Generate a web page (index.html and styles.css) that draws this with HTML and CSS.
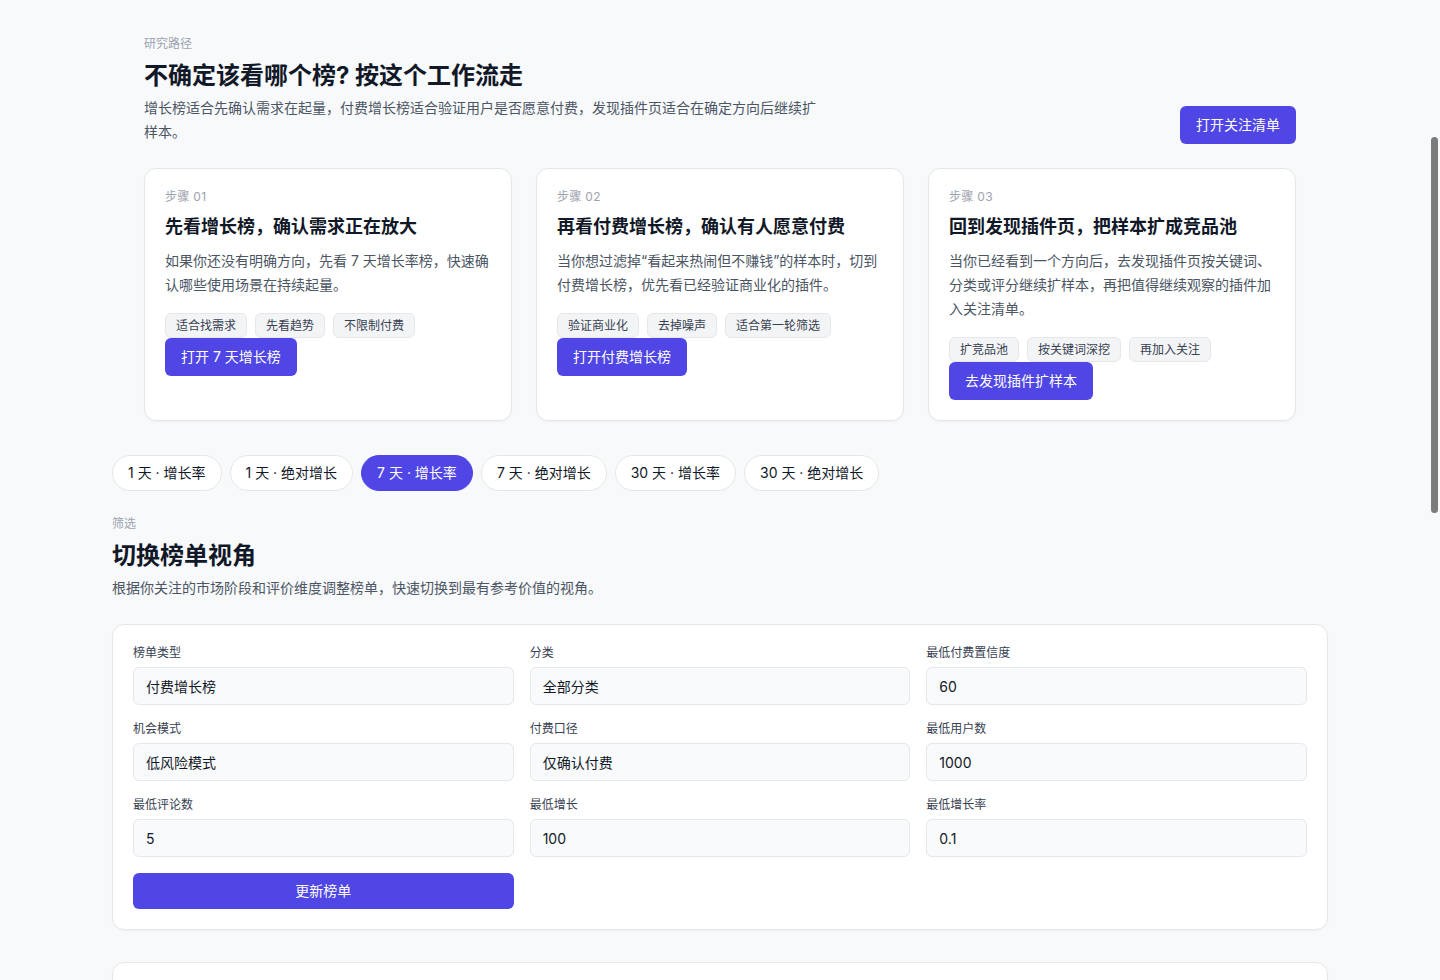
FILE: index.html
```html
<!DOCTYPE html>
<html lang="zh-CN">
  <head>
    <meta charset="UTF-8" />
    <meta name="viewport" content="width=device-width, initial-scale=1.0" />
    <title>榜单 · 研究路径</title>
    <link rel="stylesheet" href="styles.css">
  </head>
  <body>
    <main class="page">
      <!-- 研究路径：三步工作流 -->
      <section class="guide">
        <div class="guide-head">
          <div class="guide-intro">
            <p class="eyebrow">研究路径</p>
            <h1 class="guide-title">不确定该看哪个榜? 按这个工作流走</h1>
            <p class="guide-desc">增长榜适合先确认需求在起量，付费增长榜适合验证用户是否愿意付费，发现插件页适合在确定方向后继续扩样本。</p>
          </div>
          <a class="btn btn-primary" href="#">打开关注清单</a>
        </div>

        <div class="steps">
          <article class="step-card">
            <p class="eyebrow step-no">步骤 01</p>
            <h3 class="step-title">先看增长榜，确认需求正在放大</h3>
            <p class="step-desc">如果你还没有明确方向，先看 7 天增长率榜，快速确认哪些使用场景在持续起量。</p>
            <div class="tags">
              <span class="tag">适合找需求</span>
              <span class="tag">先看趋势</span>
              <span class="tag">不限制付费</span>
            </div>
            <a class="btn btn-primary" href="#">打开 7 天增长榜</a>
          </article>

          <article class="step-card">
            <p class="eyebrow step-no">步骤 02</p>
            <h3 class="step-title">再看付费增长榜，确认有人愿意付费</h3>
            <p class="step-desc">当你想过滤掉“看起来热闹但不赚钱”的样本时，切到付费增长榜，优先看已经验证商业化的插件。</p>
            <div class="tags">
              <span class="tag">验证商业化</span>
              <span class="tag">去掉噪声</span>
              <span class="tag">适合第一轮筛选</span>
            </div>
            <a class="btn btn-primary" href="#">打开付费增长榜</a>
          </article>

          <article class="step-card">
            <p class="eyebrow step-no">步骤 03</p>
            <h3 class="step-title">回到发现插件页，把样本扩成竞品池</h3>
            <p class="step-desc">当你已经看到一个方向后，去发现插件页按关键词、分类或评分继续扩样本，再把值得继续观察的插件加入关注清单。</p>
            <div class="tags">
              <span class="tag">扩竞品池</span>
              <span class="tag">按关键词深挖</span>
              <span class="tag">再加入关注</span>
            </div>
            <a class="btn btn-primary" href="#">去发现插件扩样本</a>
          </article>
        </div>
      </section>

      <!-- 榜单快捷切换 -->
      <nav class="board-tabs">
        <a class="board-tab" href="#">1 天 · 增长率</a>
        <a class="board-tab" href="#">1 天 · 绝对增长</a>
        <a class="board-tab active" href="#">7 天 · 增长率</a>
        <a class="board-tab" href="#">7 天 · 绝对增长</a>
        <a class="board-tab" href="#">30 天 · 增长率</a>
        <a class="board-tab" href="#">30 天 · 绝对增长</a>
      </nav>

      <!-- 筛选表单 -->
      <section class="filters">
        <p class="eyebrow">筛选</p>
        <h2 class="section-title">切换榜单视角</h2>
        <p class="section-desc">根据你关注的市场阶段和评价维度调整榜单，快速切换到最有参考价值的视角。</p>

        <form class="panel filter-form">
          <label class="field">
            <span class="field-label">榜单类型</span>
            <select class="control">
              <option>付费增长榜</option>
              <option>增长榜</option>
            </select>
          </label>
          <label class="field">
            <span class="field-label">分类</span>
            <select class="control">
              <option>全部分类</option>
            </select>
          </label>
          <label class="field">
            <span class="field-label">最低付费置信度</span>
            <input class="control" type="text" value="60" />
          </label>

          <label class="field">
            <span class="field-label">机会模式</span>
            <select class="control">
              <option>低风险模式</option>
            </select>
          </label>
          <label class="field">
            <span class="field-label">付费口径</span>
            <select class="control">
              <option>仅确认付费</option>
            </select>
          </label>
          <label class="field">
            <span class="field-label">最低用户数</span>
            <input class="control" type="text" value="1000" />
          </label>

          <label class="field">
            <span class="field-label">最低评论数</span>
            <input class="control" type="text" value="5" />
          </label>
          <label class="field">
            <span class="field-label">最低增长</span>
            <input class="control" type="text" value="100" />
          </label>
          <label class="field">
            <span class="field-label">最低增长率</span>
            <input class="control" type="text" value="0.1" />
          </label>

          <button class="btn btn-primary btn-submit" type="button">更新榜单</button>
        </form>
      </section>

      <!-- 榜单结果 -->
      <section class="panel results"></section>
    </main>

    <div class="scroll-thumb"></div>
  </body>
</html>
```

FILE: styles.css
```css
/* Reset básico */
body,
h1,
h2,
h3,
p,
form {
  margin: 0;
  padding: 0;
}

*,
*::before,
*::after {
  box-sizing: border-box;
}

body {
  background-color: #f8f9fb;
  color: #111827;
  font-family: Inter, "Noto Sans CJK SC", sans-serif;
  font-size: 14px;
  line-height: 20px;
}

.page {
  width: 1216px;
  margin: 0 auto;
  padding-top: 36px;
}

/* Textos de apoio */
.eyebrow {
  font-size: 12px;
  line-height: 16px;
  color: #9ca3af;
}

.btn {
  display: inline-block;
  border: none;
  border-radius: 6px;
  padding: 9px 16px;
  font-family: inherit;
  font-size: 14px;
  line-height: 20px;
  text-decoration: none;
  cursor: pointer;
}

.btn-primary {
  background-color: #4f46e5;
  color: #ffffff;
}

.btn-primary:hover {
  background-color: #4338ca;
}

/* Bloco do fluxo de pesquisa */
.guide {
  padding: 0 32px 34px;
}

.guide-head {
  display: flex;
  justify-content: space-between;
  align-items: flex-end;
}

.guide-title {
  margin-top: 8px;
  font-size: 24px;
  line-height: 32px;
  font-weight: 700;
  color: #111827;
}

.guide-desc {
  margin-top: 4px;
  max-width: 672px;
  font-size: 14px;
  line-height: 24px;
  color: #4b5563;
}

.steps {
  display: grid;
  grid-template-columns: repeat(3, 1fr);
  gap: 24px;
  margin-top: 24px;
}

.step-card {
  display: flex;
  flex-direction: column;
  align-items: flex-start;
  background: #ffffff;
  border: 1px solid #e5e7eb;
  border-radius: 12px;
  padding: 20px;
  box-shadow: 0 1px 2px rgba(15, 23, 42, 0.04);
}

.step-no {
  letter-spacing: 0.3px;
}

.step-title {
  margin-top: 8px;
  font-size: 18px;
  line-height: 28px;
  font-weight: 700;
  color: #111827;
}

.step-desc {
  margin-top: 8px;
  font-size: 14px;
  line-height: 24px;
  color: #4b5563;
}

.tags {
  display: flex;
  flex-wrap: wrap;
  gap: 8px;
  margin-top: 16px;
}

.tag {
  padding: 3px 10px;
  font-size: 12px;
  line-height: 17px;
  color: #374151;
  background-color: #f3f4f6;
  border: 1px solid #e5e7eb;
  border-radius: 6px;
}

/* Abas de ranking */
.board-tabs {
  display: flex;
  gap: 8px;
}

.board-tab {
  padding: 7px 15px;
  font-size: 14px;
  line-height: 20px;
  color: #111827;
  text-decoration: none;
  background: #ffffff;
  border: 1px solid #e5e7eb;
  border-radius: 999px;
}

.board-tab.active {
  background-color: #4f46e5;
  border-color: #4f46e5;
  color: #ffffff;
}

/* Seção de filtros */
.filters {
  margin-top: 25px;
}

.section-title {
  margin-top: 8px;
  font-size: 24px;
  line-height: 32px;
  font-weight: 700;
  color: #111827;
}

.section-desc {
  margin-top: 4px;
  font-size: 14px;
  line-height: 24px;
  color: #4b5563;
}

.panel {
  background: #ffffff;
  border: 1px solid #e5e7eb;
  border-radius: 12px;
  box-shadow: 0 1px 2px rgba(15, 23, 42, 0.04);
}

.filter-form {
  display: grid;
  grid-template-columns: repeat(3, 1fr);
  gap: 16px;
  margin-top: 24px;
  padding: 20px;
}

.field {
  display: flex;
  flex-direction: column;
}

.field-label {
  margin-bottom: 6px;
  font-size: 12px;
  line-height: 16px;
  color: #374151;
}

.control {
  width: 100%;
  height: 38px;
  padding: 0 12px;
  font-family: inherit;
  font-size: 14px;
  color: #111827;
  background-color: #f9fafb;
  border: 1px solid #e5e7eb;
  border-radius: 6px;
  appearance: none;
  outline: none;
}

.btn-submit {
  height: 36px;
  padding: 0 16px;
  text-align: center;
}

/* Painel de resultados (continua abaixo da dobra) */
.results {
  margin-top: 32px;
  min-height: 320px;
}

/* Barra de rolagem do print */
.scroll-thumb {
  position: fixed;
  top: 137px;
  right: 2px;
  width: 7px;
  height: 376px;
  border-radius: 4px;
  background-color: #7b7b7b;
}
```
